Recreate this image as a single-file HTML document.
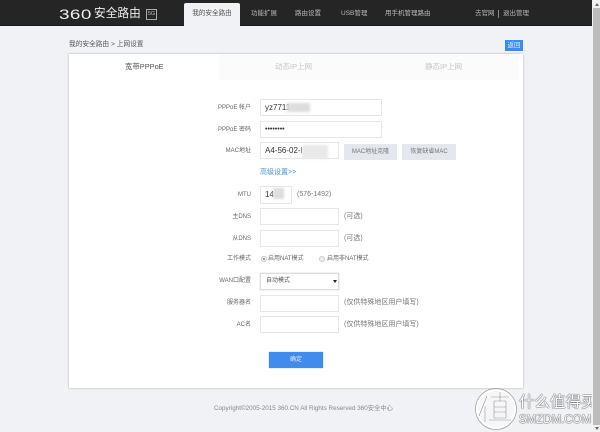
<!DOCTYPE html>
<html lang="zh">
<head>
<meta charset="utf-8">
<title>360安全路由</title>
<style>
html,body{margin:0;padding:0;width:600px;height:432px;overflow:hidden;background:#f1f2f5}
body{position:relative;font-family:"Liberation Sans","Noto Sans CJK SC",sans-serif;font-size:7px;color:#666}
.a{position:absolute;white-space:nowrap;line-height:10px}
.wrap{position:absolute;left:0;top:0;width:600px;height:432px;filter:blur(.35px)}
.hd{position:absolute;left:0;top:0;width:592px;height:25px;background:#252525;border-bottom:1px solid #1a1a1a}
.nav{color:#b9b9b9;top:9px;font-size:6.5px}
.tab{position:absolute;left:184px;top:3px;width:56px;height:23px;background:#f1f2f5;border-radius:2px 2px 0 0;text-align:center;line-height:22px;color:#555;font-size:6.6px}
.card{position:absolute;left:69px;top:54px;width:454px;height:334px;background:#fff;box-shadow:0 0 2px rgba(0,0,0,.3)}
.t2{position:absolute;left:219px;top:54px;width:300px;height:26px;background:#fbfbfb}
.l{width:60px;text-align:right;left:191px;font-size:6px;color:#666}
.i{position:absolute;box-sizing:border-box;background:#fff;border:1px solid #e6e6e6;color:#333;font-size:8px;line-height:15px;padding-left:4px;white-space:nowrap;overflow:hidden}
.b{position:absolute;background:#e4e7ee;text-align:center;color:#777;font-size:6px;line-height:16px;top:144px;height:16px}
.n{left:344px;color:#777;font-size:7px}
.m{position:absolute;background:#ddd;filter:blur(1.2px)}
.r{position:absolute;box-sizing:border-box;width:6px;height:6px;border-radius:50%;border:1px solid #ccc;background:#eee;top:256px}
</style>
</head>
<body>
<div class="wrap">
  <div class="hd"></div>
  <div class="a" style="left:59px;top:6px;font-size:14px;line-height:16px;color:#eee;transform:scaleX(1.35);transform-origin:0 50%;letter-spacing:.3px">360</div>
  <div class="a" style="left:94px;top:6px;font-size:11.7px;line-height:16px;color:#eee">安全路由</div>
  <div class="a" style="left:146px;top:9px;box-sizing:border-box;width:11px;height:11px;border:1px solid #aaa;color:#bbb;font-size:5.5px;line-height:9px;text-align:center">5G</div>

  <div class="tab">我的安全路由</div>
  <div class="a nav" style="left:251px">功能扩展</div>
  <div class="a nav" style="left:295px">路由设置</div>
  <div class="a nav" style="left:341px">USB管理</div>
  <div class="a nav" style="left:385px">用手机管理路由</div>
  <div class="a nav" style="left:475px">去官网</div>
  <div class="a" style="left:498px;top:10px;width:1px;height:8px;background:#888"></div>
  <div class="a nav" style="left:503px">退出管理</div>

  <div class="a" style="left:69px;top:40px;font-size:6.7px;color:#555">我的安全路由 &gt; 上网设置</div>
  <div class="a" style="left:505px;top:40px;width:18px;height:11px;background:#3d8bef;color:#e8f1ff;font-size:6.5px;line-height:11px;text-align:center">返回</div>

  <div class="card"></div>
  <div class="t2"></div>
  <div class="a" style="left:125px;top:62px;font-size:7.4px;color:#555">宽带PPPoE</div>
  <div class="a" style="left:275px;top:62px;font-size:7.5px;color:#c6c6c6">动态IP上网</div>
  <div class="a" style="left:425px;top:62px;font-size:7.5px;color:#c6c6c6">静态IP上网</div>

  <div class="a l" style="top:103px">PPPoE 帐户</div>
  <div class="i" style="left:260px;top:99px;width:122px;height:17px">yz7711</div>
  <div class="m" style="left:287px;top:103px;width:23px;height:9px"></div>

  <div class="a l" style="top:125px">PPPoE 密码</div>
  <div class="i" style="left:260px;top:121px;width:122px;height:17px;font-size:7px">••••••••</div>

  <div class="a l" style="top:146px">MAC地址</div>
  <div class="i" style="left:260px;top:142px;width:79px;height:17px">A4-56-02-l</div>
  <div class="m" style="left:302px;top:145px;width:26px;height:14px;background:#e9e9e9"></div>
  <div class="b" style="left:344px;width:53px">MAC地址克隆</div>
  <div class="b" style="left:402px;width:54px">恢复缺省MAC</div>

  <div class="a" style="left:260px;top:168px;font-size:7px;color:#4a90d9">高级设置&gt;&gt;</div>

  <div class="a l" style="top:190px">MTU</div>
  <div class="i" style="left:260px;top:186px;width:32px;height:18px">14</div>
  <div class="m" style="left:273px;top:188px;width:11px;height:11px"></div>
  <div class="a n" style="left:297px;top:190px">(576-1492)</div>

  <div class="a l" style="top:212px">主DNS</div>
  <div class="i" style="left:260px;top:208px;width:79px;height:17px"></div>
  <div class="a n" style="top:212px">(可选)</div>

  <div class="a l" style="top:234px">从DNS</div>
  <div class="i" style="left:260px;top:230px;width:79px;height:17px"></div>
  <div class="a n" style="top:234px">(可选)</div>

  <div class="a l" style="top:254px">工作模式</div>
  <div class="r" style="left:261px;background:#777;box-shadow:inset 0 0 0 1px #fff"></div>
  <div class="a" style="left:268px;top:254px;font-size:6px">启用NAT模式</div>
  <div class="r" style="left:319px"></div>
  <div class="a" style="left:327px;top:254px;font-size:6px">启用非NAT模式</div>

  <div class="a l" style="top:276px">WAN口配置</div>
  <div class="i" style="left:260px;top:273px;width:79px;height:17px;border:1px solid #ddd;box-shadow:0 0 1px #bbb;font-size:6px;line-height:15px;padding-left:5px;color:#555">自动模式</div>
  <div style="position:absolute;left:333px;top:280px;width:0;height:0;border-left:2px solid transparent;border-right:2px solid transparent;border-top:3px solid #222"></div>

  <div class="a l" style="top:298px">服务器名</div>
  <div class="i" style="left:260px;top:295px;width:79px;height:17px"></div>
  <div class="a n" style="top:298px">(仅供特殊地区用户填写)</div>

  <div class="a l" style="top:320px">AC名</div>
  <div class="i" style="left:260px;top:316px;width:79px;height:17px"></div>
  <div class="a n" style="top:320px">(仅供特殊地区用户填写)</div>

  <div class="a" style="left:269px;top:352px;width:54px;height:16px;background:#418bec;box-shadow:0 0 1px #6aa5f0;color:#dfeafa;font-size:6px;line-height:16px;text-align:center">确定</div>

  <div class="a" style="left:214px;top:404px;font-size:6.3px;color:#888">Copyright©2005-2015 360.CN All Rights Reserved 360安全中心</div>

  <svg class="a" style="left:474px;top:386px" width="46" height="46" viewBox="0 0 46 46">
    <circle cx="22" cy="23" r="19" fill="rgba(255,255,255,.35)" stroke="#fff" stroke-width="2"/>
    <circle cx="22" cy="23" r="20.5" fill="none" stroke="#999" stroke-width=".7"/>
    <path d="M13 10 L5 30 M11 20 V36" fill="none" stroke="#fff" stroke-width="2"/>
    <path d="M13 10 L5 30 M11 20 V36" fill="none" stroke="#888" stroke-width=".6"/>
    <path d="M17 11 H35 M26 6 V15 M20 15 H32 V32 H20 Z M20 21 H32 M20 26 H32 M15 34 H37" fill="none" stroke="#fff" stroke-width="1.6"/>
    <path d="M17 11 H35 M26 6 V15 M20 15 H32 V32 H20 Z M20 21 H32 M20 26 H32 M15 34 H37" fill="none" stroke="#888" stroke-width=".6"/>
  </svg>
  <div class="a" style="left:519px;top:394px;font-size:15.5px;line-height:17px;color:#fff;text-shadow:0 0 1px #555,0 0 1px #555,0 0 1px #777">什么值得买</div>
  <div class="a" style="left:519px;top:414px;font-size:11.5px;line-height:13px;color:#fff;text-shadow:0 0 1px #555,0 0 1px #555,0 0 1px #777">SMZDM.COM</div>
</div>

<div style="position:absolute;left:592px;top:0;width:8px;height:432px;background:#f1f1f1"></div>
<div style="position:absolute;left:593px;top:8px;width:7px;height:417px;background:#bcbcbc"></div>
<div style="position:absolute;left:595px;top:3px;width:0;height:0;border-left:2px solid transparent;border-right:2px solid transparent;border-bottom:3px solid #666"></div>
<div style="position:absolute;left:595px;top:427px;width:0;height:0;border-left:2px solid transparent;border-right:2px solid transparent;border-top:3px solid #666"></div>
</body>
</html>
